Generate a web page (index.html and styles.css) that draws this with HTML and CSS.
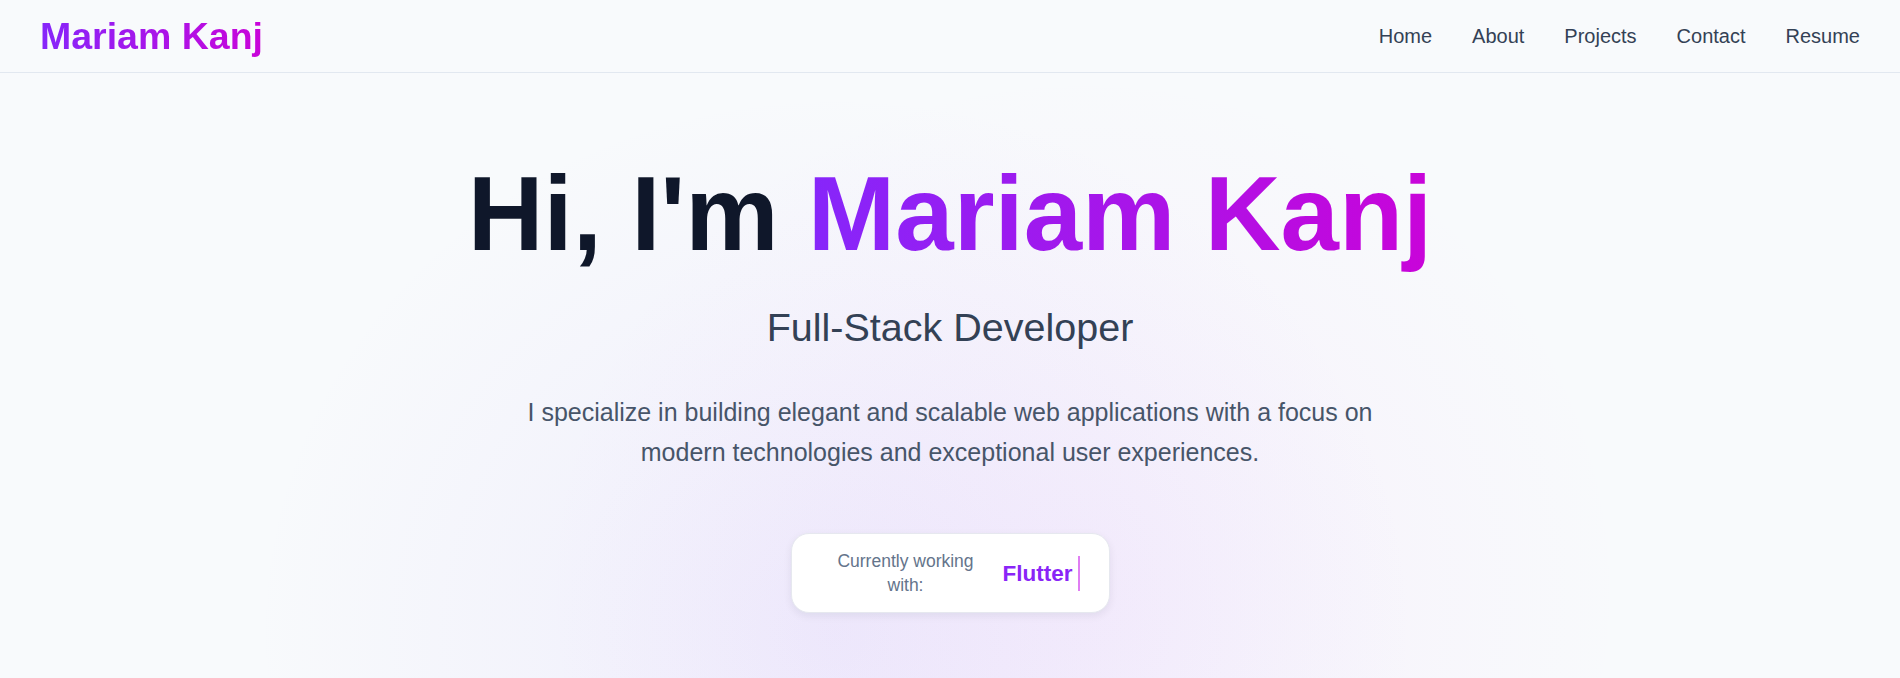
FILE: index.html
```html
<!DOCTYPE html>
<html lang="en">
<head>
<meta charset="utf-8">
<title>Mariam Kanj</title>
<link rel="stylesheet" href="styles.css">
</head>
<body>
<header class="site-header">
  <a class="logo" href="#">Mariam Kanj</a>
  <nav class="nav">
    <a href="#">Home</a>
    <a href="#">About</a>
    <a href="#">Projects</a>
    <a href="#">Contact</a>
    <a href="#">Resume</a>
  </nav>
</header>
<main class="hero">
  <h1 class="hero-title">Hi, I'm <span class="gradient-text">Mariam Kanj</span></h1>
  <h2 class="hero-subtitle">Full-Stack Developer</h2>
  <p class="hero-text">I specialize in building elegant and scalable web applications with a focus on modern technologies and exceptional user experiences.</p>
  <div class="working-card">
    <span class="working-label">Currently working with:</span>
    <span class="working-tech">Flutter</span>
    <span class="caret"></span>
  </div>
</main>
</body>
</html>
```

FILE: styles.css
```css
* {
  box-sizing: border-box;
}

html, body {
  margin: 0;
  padding: 0;
}

body {
  font-family: "Liberation Sans", Arial, sans-serif;
  background: #f8fafc;
  color: #0f172a;
  height: 678px;
  overflow: hidden;
}

a {
  text-decoration: none;
}

.site-header {
  height: 73px;
  display: flex;
  align-items: center;
  justify-content: space-between;
  padding: 0 40px;
  border-bottom: 1px solid #e2e8f0;
  background: #f8fafc;
}

.logo {
  font-size: 37.5px;
  font-weight: 700;
  line-height: 1.2;
  background: linear-gradient(90deg, #8626fa 0%, #c904d9 100%);
  -webkit-background-clip: text;
  background-clip: text;
  color: transparent;
}

.nav {
  display: flex;
  gap: 40px;
}

.nav a {
  font-size: 20px;
  color: #334155;
  line-height: 1.4;
}

.hero {
  display: flex;
  flex-direction: column;
  align-items: center;
  text-align: center;
  height: 605px;
  padding-top: 85px;
  background:
    radial-gradient(ellipse 580px 540px at 44% 560px, rgba(167, 139, 250, 0.13) 0%, rgba(167, 139, 250, 0.06) 50%, rgba(167, 139, 250, 0) 100%),
    radial-gradient(ellipse 540px 520px at 57% 520px, rgba(232, 121, 249, 0.08) 0%, rgba(232, 121, 249, 0.04) 50%, rgba(232, 121, 249, 0) 100%),
    #f8fafc;
}

.hero-title {
  margin: 0;
  font-size: 105px;
  line-height: 112px;
  font-weight: 700;
  color: #0f172a;
}

.gradient-text {
  background: linear-gradient(90deg, #8626fa 0%, #c904d9 100%);
  -webkit-background-clip: text;
  background-clip: text;
  color: transparent;
}

.hero-subtitle {
  margin: 32px 0 0;
  font-size: 39.5px;
  line-height: 51px;
  font-weight: 400;
  color: #334155;
}

.hero-text {
  margin: 39px 0 0;
  max-width: 900px;
  font-size: 25px;
  line-height: 40px;
  color: #475569;
}

.working-card {
  margin-top: 61px;
  width: 319px;
  height: 80px;
  display: flex;
  align-items: center;
  padding: 0 29px 0 30px;
  background: #ffffff;
  border: 1px solid #e6e8ef;
  border-radius: 18px;
  box-shadow: 0 3px 8px rgba(15, 23, 42, 0.07);
}

.working-label {
  width: 168px;
  flex: none;
  font-size: 17.5px;
  line-height: 24.5px;
  color: #64748b;
  text-align: center;
}

.working-tech {
  margin-left: 13px;
  font-size: 22.5px;
  font-weight: 700;
  color: #8a25f7;
  line-height: 1.2;
}

.caret {
  width: 2px;
  height: 35px;
  margin-left: 5px;
  background: #e07ef3;
  flex: none;
}
```
